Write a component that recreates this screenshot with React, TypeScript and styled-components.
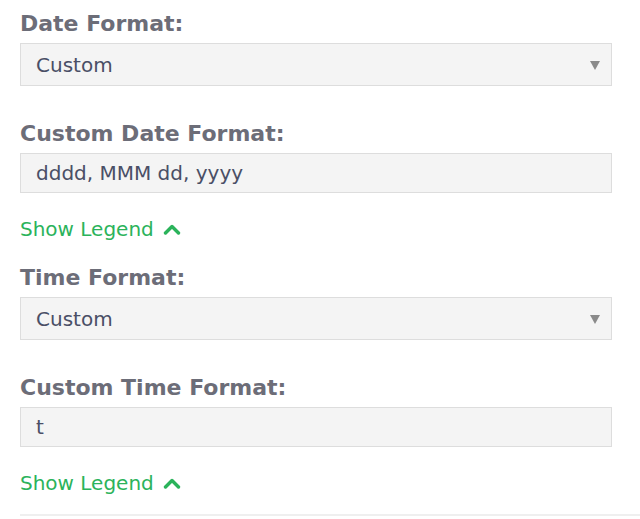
import styled, { createGlobalStyle } from 'styled-components';

const GlobalStyle = createGlobalStyle`
  html, body {
    margin: 0;
    padding: 0;
    background: #ffffff;
  }
  body {
    font-family: 'DejaVu Sans', Verdana, sans-serif;
  }
`;

const StyledPanel = styled.div`
  display: flex;
  flex-direction: column;
  padding: 12px 0 0 20px;
`;

const StyledField = styled.div<{ $gap: number }>`
  display: flex;
  flex-direction: column;
  width: 592px;
  margin-bottom: ${(p) => p.$gap}px;
`;

const StyledLabel = styled.label`
  font-size: 22px;
  line-height: 24px;
  font-weight: bold;
  color: #6c6d78;
  margin-bottom: 7px;
`;

const StyledBox = styled.div<{ $height: number }>`
  position: relative;
  display: flex;
  align-items: center;
  box-sizing: border-box;
  height: ${(p) => p.$height}px;
  padding: 0 15px;
  background: #f4f4f4;
  border: 1px solid #dddddd;
  font-size: 20px;
  color: #4a4f66;
`;

const StyledArrow = styled.span`
  position: absolute;
  right: 11px;
  top: 50%;
  margin-top: -4px;
  width: 0;
  height: 0;
  border-left: 5px solid transparent;
  border-right: 5px solid transparent;
  border-top: 9px solid #8a8a8a;
`;

const StyledLegend = styled.a<{ $gap: number }>`
  display: flex;
  align-items: center;
  gap: 9px;
  font-size: 20px;
  line-height: 24px;
  color: #2bb35b;
  text-decoration: none;
  cursor: pointer;
  margin-bottom: ${(p) => p.$gap}px;
`;

const StyledRule = styled.div`
  height: 2px;
  background: #efefef;
`;

function Chevron() {
  return (
    <svg width="18" height="12" viewBox="0 0 18 12">
      <polyline
        points="2.5,10 9,3.5 15.5,10"
        fill="none"
        stroke="#2bb35b"
        strokeWidth="3.4"
        strokeLinecap="round"
        strokeLinejoin="round"
      />
    </svg>
  );
}

function SelectField({ label, value }: { label: string; value: string }) {
  return (
    <StyledField $gap={36}>
      <StyledLabel>{label}</StyledLabel>
      <StyledBox $height={43}>
        {value}
        <StyledArrow />
      </StyledBox>
    </StyledField>
  );
}

function FormatField({ label, value }: { label: string; value: string }) {
  return (
    <StyledField $gap={24}>
      <StyledLabel>{label}</StyledLabel>
      <StyledBox $height={40}>{value}</StyledBox>
    </StyledField>
  );
}

export default function App() {
  return (
    <>
      <GlobalStyle />
      <StyledPanel>
        <SelectField label="Date Format:" value="Custom" />
        <FormatField label="Custom Date Format:" value="dddd, MMM dd, yyyy" />
        <StyledLegend $gap={25}>
          Show Legend <Chevron />
        </StyledLegend>
        <SelectField label="Time Format:" value="Custom" />
        <FormatField label="Custom Time Format:" value="t" />
        <StyledLegend $gap={19}>
          Show Legend <Chevron />
        </StyledLegend>
        <StyledRule />
      </StyledPanel>
    </>
  );
}
